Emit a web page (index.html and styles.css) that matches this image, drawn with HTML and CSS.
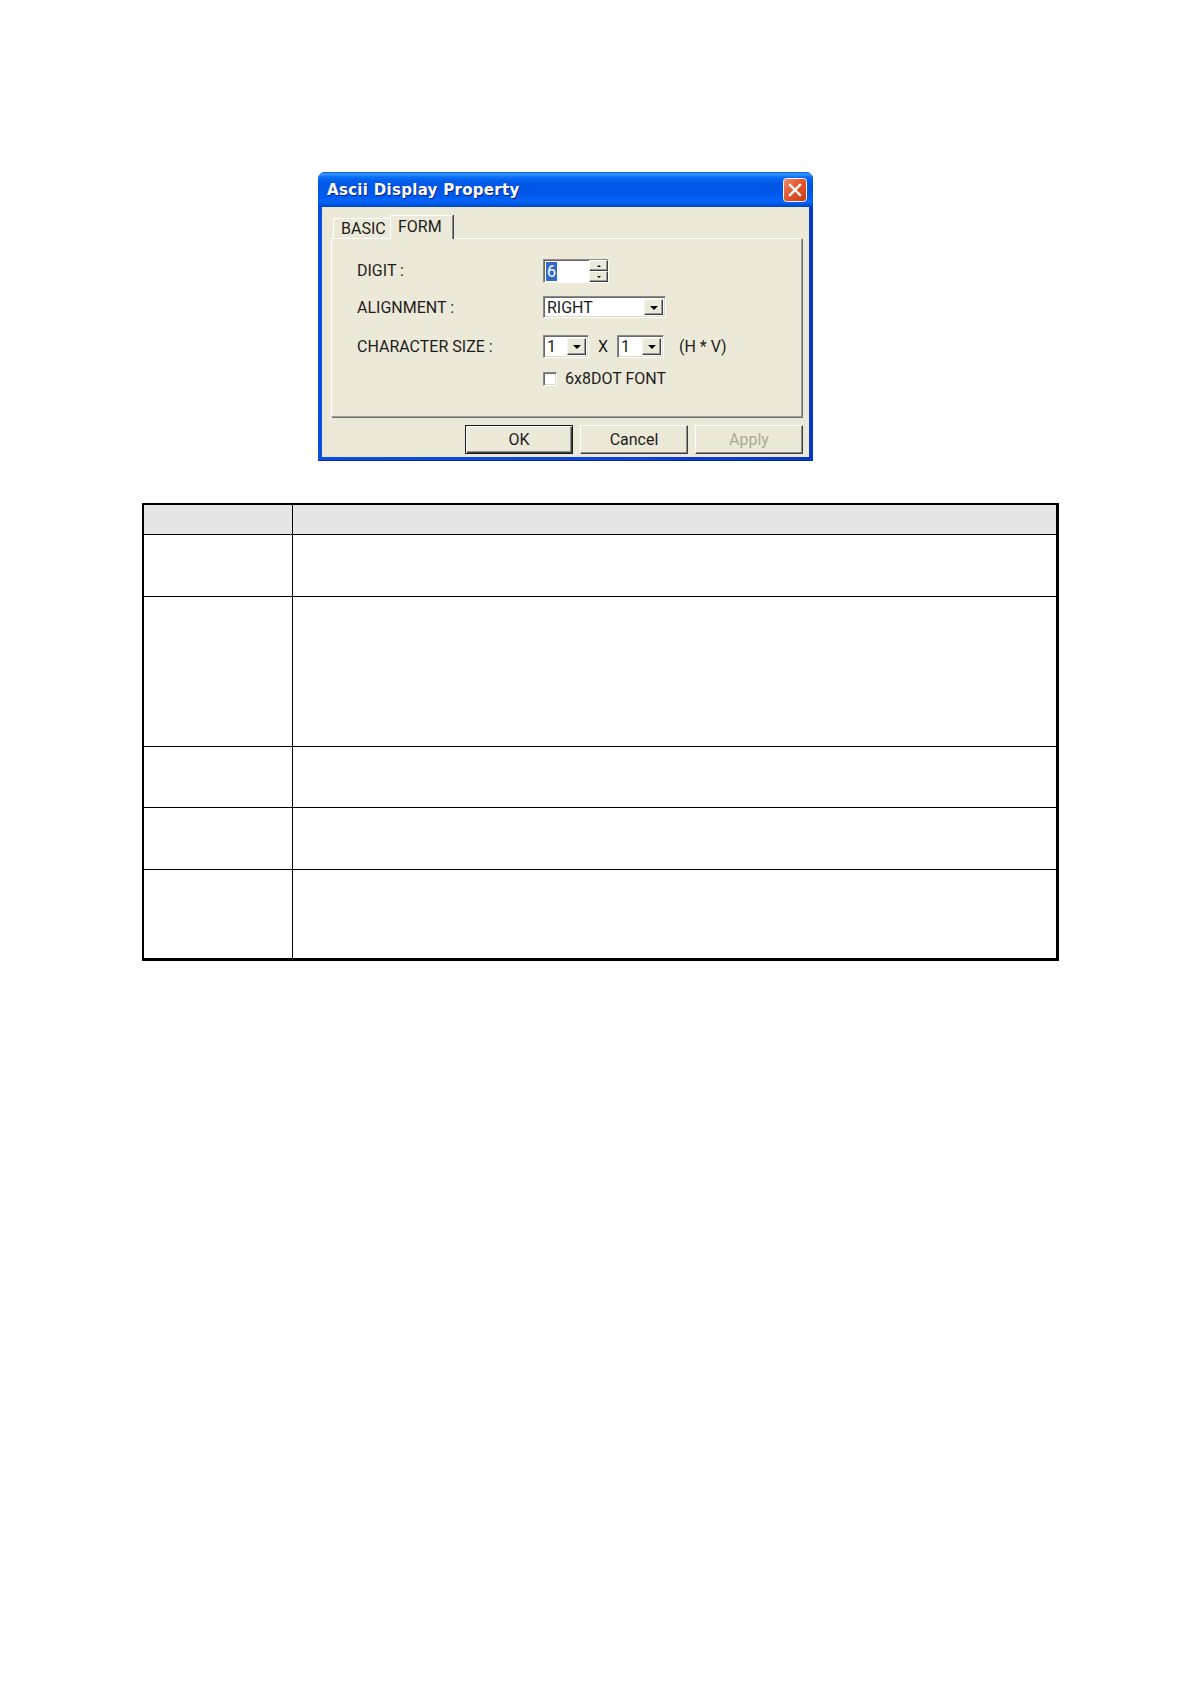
FILE: index.html
```html
<!DOCTYPE html>
<html>
<head>
<meta charset="utf-8">
<title>Ascii Display Property</title>
<link rel="stylesheet" href="styles.css">
</head>
<body>
<div class="page">
  <div class="dialog">
    <div class="titlebar">
      <span class="title">Ascii Display Property</span>
      <span class="close">
        <svg width="24" height="24" viewBox="0 0 24 24">
          <defs>
            <linearGradient id="cg" x1="0" y1="0" x2="1" y2="1">
              <stop offset="0" stop-color="#F0906E"/>
              <stop offset="0.45" stop-color="#E2582F"/>
              <stop offset="1" stop-color="#C83A14"/>
            </linearGradient>
          </defs>
          <rect x="0.5" y="0.5" width="23" height="23" rx="3" fill="url(#cg)" stroke="#F4F4F4" stroke-width="1"/>
          <path d="M7 7 L17 17 M17 7 L7 17" stroke="#FFFFFF" stroke-width="2.4" stroke-linecap="square"/>
        </svg>
      </span>
    </div>
    <div class="body">
      <div class="tabs">
        <div class="tab">BASIC</div>
        <div class="tab active">FORM</div>
      </div>
      <div class="panel">
        <div class="form">
          <div class="label">DIGIT :</div>
          <div class="ctrl">
            <div class="spin">
              <div class="field edit"><span class="sel">6</span></div>
              <div class="spinbtns">
                <div class="sb"><span class="tri-up"></span></div>
                <div class="sb"><span class="tri-down"></span></div>
              </div>
            </div>
          </div>

          <div class="label">ALIGNMENT :</div>
          <div class="ctrl">
            <div class="field combo wide"><span class="val">RIGHT</span><span class="drop"><span class="arrow"></span></span></div>
          </div>

          <div class="label">CHARACTER SIZE :</div>
          <div class="ctrl">
            <div class="field combo small"><span class="val">1</span><span class="drop"><span class="arrow"></span></span></div>
            <span class="times">X</span>
            <div class="field combo small2"><span class="val">1</span><span class="drop"><span class="arrow"></span></span></div>
            <span class="hv">(H * V)</span>
          </div>

          <div class="label"></div>
          <div class="ctrl">
            <span class="check"></span><span class="checklabel">6x8DOT FONT</span>
          </div>
        </div>
      </div>
      <div class="buttons">
        <div class="btn default">OK</div>
        <div class="btn">Cancel</div>
        <div class="btn disabled">Apply</div>
      </div>
    </div>
  </div>

  <div class="table">
    <div class="cell c1 head"></div><div class="cell c2 head"></div>
    <div class="cell c1"></div><div class="cell c2"></div>
    <div class="cell c1"></div><div class="cell c2"></div>
    <div class="cell c1"></div><div class="cell c2"></div>
    <div class="cell c1"></div><div class="cell c2"></div>
    <div class="cell c1 last"></div><div class="cell c2 last"></div>
  </div>
</div>
</body>
</html>
```
FILE: styles.css
```css
* { box-sizing: border-box; }

html, body {
  margin: 0;
  padding: 0;
  background: #ffffff;
}

body {
  font-family: Roboto, "Liberation Sans", sans-serif;
  color: #1c1c1c;
}

.page {
  padding-top: 172px;
  width: 1191px;
  min-height: 1684px;
}

/* ---------- dialog ---------- */
.dialog {
  margin-left: 318px;
  width: 495px;
  height: 289px;
  background: linear-gradient(to right, #0A4FE2, #0A47DA 50%, #0838C8);
  border-radius: 7px 7px 0 0;
  padding-bottom: 4px;
  display: flex;
  flex-direction: column;
  box-shadow: inset 0 -1px 0 #0A2A9E;
}

.titlebar {
  height: 35px;
  flex: none;
  border-radius: 7px 7px 0 0;
  background: linear-gradient(to bottom,
    #0058EE 0%, #3A93FF 5%, #2A8CFF 9%, #0A72FC 14%,
    #0462EE 22%, #0058E6 34%, #0056E8 60%, #005CF2 72%,
    #0264F8 82%, #005CEC 90%, #004ED2 96%, #0044BC 100%);
  display: flex;
  align-items: center;
  justify-content: space-between;
  padding: 1px 6px 0 9px;
}

.title {
  font-family: "DejaVu Sans", Verdana, sans-serif;
  font-weight: bold;
  font-size: 15px;
  letter-spacing: 0.3px;
  color: #ffffff;
  text-shadow: 1px 1px 0 #0A1F8A;
}

.close {
  width: 24px;
  height: 24px;
  display: block;
}
.close svg { display: block; }

.body {
  flex: 1;
  margin: 0 4px;
  background: #ECE9D8;
  padding: 8px 7px 0 9px;
  display: flex;
  flex-direction: column;
}

/* ---------- tabs ---------- */
.tabs {
  display: flex;
  align-items: flex-end;
  height: 23px;
  padding-left: 2px;
  position: relative;
  z-index: 2;
}

.tab {
  height: 20px;
  font-size: 16px;
  line-height: 19px;
  padding-left: 7px;
  width: 57px;
  border-top: 1px solid #FFFFFF;
  border-left: 1px solid #FFFFFF;
  background: #ECE9D8;
  color: #1c1c1c;
  white-space: nowrap;
}

.tab.active {
  height: 24px;
  margin-bottom: -1px;
  width: 63px;
  padding-left: 7px;
  line-height: 21px;
  border-right: 1px solid #8C8C8C;
  box-shadow: 1px 0 0 #404040;
}

/* ---------- panel ---------- */
.panel {
  height: 179px;
  border-top: 1px solid #FFFFFF;
  border-left: 1px solid #FFFFFF;
  border-right: 1px solid #A0A0A0;
  border-bottom: 1px solid #A0A0A0;
  box-shadow: 1px 1px 0 #6E6E6E;
  padding: 20px 0 0 25px;
  position: relative;
  z-index: 1;
}

.form {
  display: grid;
  grid-template-columns: 186px auto;
  grid-template-rows: 37px 39px 37px 14px;
  align-items: start;
}

.label {
  font-size: 16px;
  line-height: 24px;
  white-space: nowrap;
}
.form .label:nth-child(3) { line-height: 23px; }
.form .label:nth-child(5) { line-height: 23px; }

.ctrl {
  display: flex;
  align-items: center;
  font-size: 16px;
}

/* sunken field */
.field {
  background: #FFFFFF;
  border: 1px solid;
  border-color: #8A8A8A #FFFFFF #FFFFFF #8A8A8A;
  box-shadow: inset 1px 1px 0 #6A6A6A, inset -1px -1px 0 #DCD9CC;
  display: flex;
  align-items: center;
}

.spin {
  display: flex;
  height: 24px;
}

.edit {
  width: 46px;
  height: 24px;
  padding-left: 2px;
  border-right: none;
  box-shadow: inset 1px 1px 0 #6A6A6A;
}

.sel {
  background: #316AC5;
  color: #FFFFFF;
  font-size: 16px;
  line-height: 19px;
  padding: 0 1px;
}

.spinbtns {
  width: 20px;
  height: 24px;
  display: flex;
  flex-direction: column;
  border-top: 1px solid #8A8A8A;
  border-bottom: 1px solid #FFFFFF;
  border-right: 1px solid #FFFFFF;
  background: #FFFFFF;
}

.sb {
  flex: 1;
  background: #ECE9D8;
  border: 1px solid;
  border-color: #FFFFFF #404040 #404040 #FFFFFF;
  box-shadow: inset -1px -1px 0 #9A9A9A;
  display: flex;
  align-items: center;
  justify-content: center;
}

.tri-up, .tri-down {
  width: 0;
  height: 0;
  border-left: 2px solid transparent;
  border-right: 2px solid transparent;
}
.tri-up { border-bottom: 2px solid #000; }
.tri-down { border-top: 2px solid #000; }

.combo {
  height: 22px;
  justify-content: space-between;
  padding: 2px 2px 2px 3px;
}
.combo.wide { width: 123px; }
.combo.small { width: 46px; height: 23px; }
.combo.small2 { width: 47px; height: 23px; }

.val {
  font-size: 16px;
  line-height: 18px;
  padding-top: 1px;
}

.drop {
  width: 19px;
  height: 100%;
  background: #ECE9D8;
  border: 1px solid;
  border-color: #F4F3EC #404040 #404040 #F4F3EC;
  box-shadow: inset -1px -1px 0 #9A9A9A;
  display: flex;
  align-items: center;
  justify-content: center;
}

.arrow {
  width: 0;
  height: 0;
  border-left: 4px solid transparent;
  border-right: 4px solid transparent;
  border-top: 4px solid #000;
  margin-top: 1px;
}

.times {
  margin: 0 9px;
  width: 10px;
  text-align: center;
  line-height: 23px;
}

.hv {
  margin-left: 15px;
  line-height: 23px;
  white-space: nowrap;
}

.check {
  width: 14px;
  height: 14px;
  background: #FFFFFF;
  border: 1px solid;
  border-color: #8A8A8A #FFFFFF #FFFFFF #8A8A8A;
  box-shadow: inset 1px 1px 0 #6A6A6A, inset -1px -1px 0 #DCD9CC;
  flex: none;
}

.checklabel {
  margin-left: 8px;
  line-height: 14px;
  white-space: nowrap;
}

/* ---------- buttons ---------- */
.buttons {
  margin-top: 8px;
  display: flex;
  justify-content: flex-end;
  gap: 7px;
  padding-right: 0;
  margin-right: -1px;
}

.btn {
  width: 108px;
  height: 29px;
  font-size: 16px;
  line-height: 27px;
  text-align: center;
  background: #ECE9D8;
  border: 1px solid;
  border-color: #FFFFFF #404040 #404040 #FFFFFF;
  box-shadow: inset -1px -1px 0 #8E8E8E;
  color: #1c1c1c;
}

.btn.default {
  border: 1px solid #1A1A1A;
  box-shadow: inset 1px 1px 0 #FFFFFF, inset -1px -1px 0 #404040, inset -2px -2px 0 #8E8E8E;
}

.btn.disabled {
  color: #ACA899;
}

/* ---------- table ---------- */
.table {
  margin-top: 42px;
  margin-left: 142px;
  width: 917px;
  display: grid;
  grid-template-columns: 149px 1fr;
  grid-template-rows: 30px 62px 150px 61px 62px 88px;
  border-style: solid;
  border-color: #000000;
  border-width: 2px 3px 3px 2px;
}

.cell {
  border-bottom: 1px solid #000000;
  background: #FFFFFF;
}
.cell.c1 { border-right: 1px solid #000000; }
.cell.head { background: #E6E6E6; }
.cell.last { border-bottom: none; }
```
